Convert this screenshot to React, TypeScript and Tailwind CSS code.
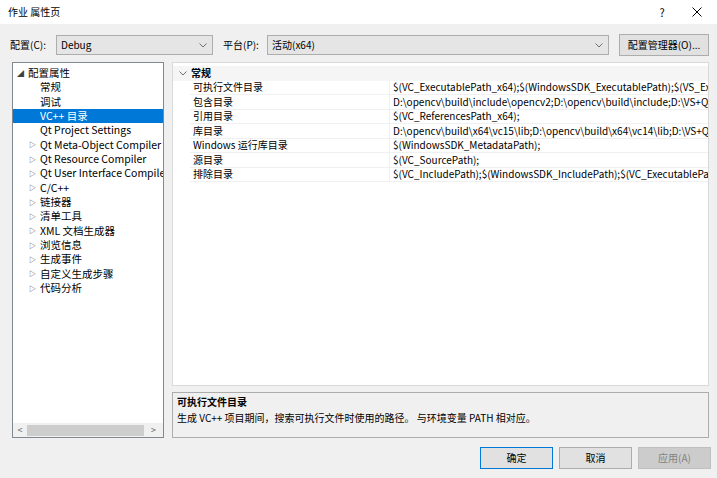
import React from 'react';

const tree: { label: string; level: number; expander?: 'open' | 'closed'; selected?: boolean }[] = [
    { label: '配置属性', level: 0, expander: 'open' },
    { label: '常规', level: 1 },
    { label: '调试', level: 1 },
    { label: 'VC++ 目录', level: 1, selected: true },
    { label: 'Qt Project Settings', level: 1 },
    { label: 'Qt Meta-Object Compiler', level: 1, expander: 'closed' },
    { label: 'Qt Resource Compiler', level: 1, expander: 'closed' },
    { label: 'Qt User Interface Compiler', level: 1, expander: 'closed' },
    { label: 'C/C++', level: 1, expander: 'closed' },
    { label: '链接器', level: 1, expander: 'closed' },
    { label: '清单工具', level: 1, expander: 'closed' },
    { label: 'XML 文档生成器', level: 1, expander: 'closed' },
    { label: '浏览信息', level: 1, expander: 'closed' },
    { label: '生成事件', level: 1, expander: 'closed' },
    { label: '自定义生成步骤', level: 1, expander: 'closed' },
    { label: '代码分析', level: 1, expander: 'closed' },
];

const props: [string, string][] = [
    ['可执行文件目录', '$(VC_ExecutablePath_x64);$(WindowsSDK_ExecutablePath);$(VS_ExecutablePath);$(MSBuild_ExecutablePath)'],
    ['包含目录', 'D:\\opencv\\build\\include\\opencv2;D:\\opencv\\build\\include;D:\\VS+Qt\\include;$(IncludePath)'],
    ['引用目录', '$(VC_ReferencesPath_x64);'],
    ['库目录', 'D:\\opencv\\build\\x64\\vc15\\lib;D:\\opencv\\build\\x64\\vc14\\lib;D:\\VS+Qt\\lib;$(LibraryPath)'],
    ['Windows 运行库目录', '$(WindowsSDK_MetadataPath);'],
    ['源目录', '$(VC_SourcePath);'],
    ['排除目录', '$(VC_IncludePath);$(WindowsSDK_IncludePath);$(VC_ExecutablePath_x64);$(VC_LibraryPath_x64)'],
];

const Chevron = () => (
    <svg width="8" height="5" viewBox="0 0 8 5" className="text-[#707070]">
        <path d="M0.5 0.5 L4 4 L7.5 0.5" fill="none" stroke="currentColor" strokeWidth="1" />
    </svg>
);

const Select = ({ value, className }: { value: string; className: string }) => (
    <div className={`h-[20px] flex items-center justify-between pl-[4px] pr-[5px] bg-[#e5e5e5] border border-[#adadad] ${className}`}>
        <span>{value}</span>
        <Chevron />
    </div>
);

export default function App() {
    return (
        <div className="w-[717px] h-[478px] bg-[#f0f0f0] flex flex-col text-[10px] leading-[14px] text-black font-['Noto_Sans_CJK_SC',sans-serif] overflow-hidden">
            {/* title bar */}
            <div className="h-[24px] bg-white flex items-center pl-[8px] shrink-0">
                <span className="flex-1">作业 属性页</span>
                <span className="w-[20px] text-center mr-[20px] text-[11px]">?</span>
                <svg width="10" height="10" viewBox="0 0 10 10" className="mr-[15px]">
                    <path d="M0.5 0.5 L9.5 9.5 M9.5 0.5 L0.5 9.5" stroke="#000" strokeWidth="1" />
                </svg>
            </div>

            {/* config row */}
            <div className="flex items-center pl-[10px] pt-[10px] h-[32px] shrink-0">
                <span className="w-[46px]">配置(C):</span>
                <Select value="Debug" className="w-[157px]" />
                <span className="ml-[10px] w-[44px]">平台(P):</span>
                <Select value="活动(x64)" className="w-[342px]" />
                <div className="ml-[10px] w-[90px] h-[22px] border border-[#adadad] bg-[#e1e1e1] flex items-center justify-center">
                    配置管理器(O)...
                </div>
            </div>

            {/* main */}
            <div className="flex pl-[12px] pt-[6px] h-[382px] shrink-0">
                {/* tree */}
                <div className="w-[152px] h-[376px] bg-white border border-[#828790] flex flex-col">
                    <div className="flex-1 pt-[3px] overflow-hidden text-[10.5px]">
                        {tree.map(t => (
                            <div
                                key={t.label}
                                className={`h-[14.35px] flex items-center whitespace-nowrap leading-none ${t.selected ? 'bg-[#0078d7] text-white' : ''}`}
                            >
                                <span className={`${t.level === 0 ? 'w-[15px] pl-[4px]' : 'w-[27px] pl-[16px]'} text-[7px] text-[#404040] shrink-0`}>
                                    {t.expander === 'open' ? '◢' : t.expander === 'closed' ? '▷' : ''}
                                </span>
                                <span>{t.label}</span>
                            </div>
                        ))}
                    </div>
                    <div className="h-[14px] flex items-center bg-[#f0f0f0] shrink-0 text-[#606060]">
                        <span className="w-[14px] text-center text-[9px]">&lt;</span>
                        <div className="h-[11px] w-[117px] bg-[#cdcdcd]"></div>
                        <span className="flex-1 text-center text-[9px]">&gt;</span>
                    </div>
                </div>

                {/* right */}
                <div className="ml-[8px] w-[537px] flex flex-col">
                    <div className="h-[325px] bg-white border border-[#d9d9d9] overflow-hidden">
                        <div className="h-[14.5px] flex items-center bg-[#f5f5f5] mt-[3px] leading-none">
                            <span className="w-[18px] flex justify-center pl-[2px]"><Chevron /></span>
                            <span className="font-bold">常规</span>
                        </div>
                        {props.map(([k, v]) => (
                            <div key={k} className="h-[14.5px] flex items-stretch leading-none">
                                <div className="w-[17px] shrink-0"></div>
                                <div className="w-[199px] shrink-0 flex items-center pl-[3px] border-b border-[#f0f0f0] whitespace-nowrap">{k}</div>
                                <div className="flex-1 flex items-center pl-[3px] border-b border-l border-[#f0f0f0] whitespace-nowrap overflow-hidden">{v}</div>
                            </div>
                        ))}
                    </div>
                    <div className="mt-[6px] h-[46px] border border-[#adadad] bg-[#f0f0f0] pl-[4px] pt-[2px] flex flex-col gap-[2px]">
                        <span className="font-bold">可执行文件目录</span>
                        <span>生成 VC++ 项目期间，搜索可执行文件时使用的路径。 与环境变量 PATH 相对应。</span>
                    </div>
                </div>
            </div>

            {/* buttons */}
            <div className="flex justify-end pr-[6px] pt-[9px] gap-[6px]">
                <div className="w-[73px] h-[22px] border border-[#0078d7] bg-[#e1e1e1] flex items-center justify-center">确定</div>
                <div className="w-[73px] h-[22px] border border-[#adadad] bg-[#e1e1e1] flex items-center justify-center">取消</div>
                <div className="w-[73px] h-[22px] border border-[#bfbfbf] bg-[#cccccc] text-[#838383] flex items-center justify-center">应用(A)</div>
            </div>
        </div>
    );
}
